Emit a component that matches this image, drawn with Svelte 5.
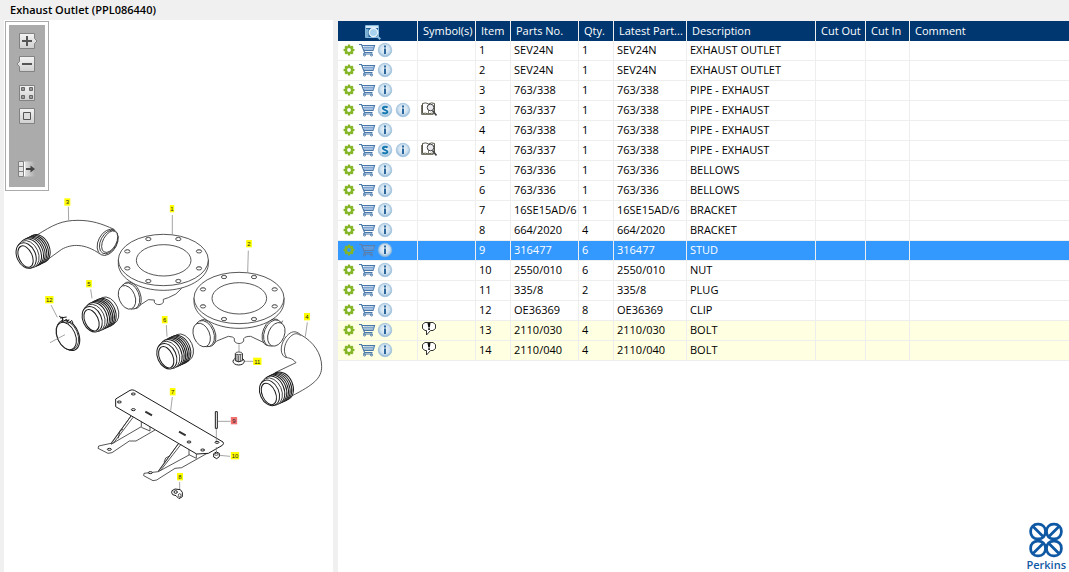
<script>
  const parts = [
    { item: '1', no: 'SEV24N', qty: 1, desc: 'EXHAUST OUTLET' },
    { item: '2', no: 'SEV24N', qty: 1, desc: 'EXHAUST OUTLET' },
    { item: '3', no: '763/338', qty: 1, desc: 'PIPE - EXHAUST' },
    { item: '3', no: '763/337', latest: '763/338', qty: 1, desc: 'PIPE - EXHAUST', superseded: true, symbol: 'book' },
    { item: '4', no: '763/338', qty: 1, desc: 'PIPE - EXHAUST' },
    { item: '4', no: '763/337', latest: '763/338', qty: 1, desc: 'PIPE - EXHAUST', superseded: true, symbol: 'book' },
    { item: '5', no: '763/336', qty: 1, desc: 'BELLOWS' },
    { item: '6', no: '763/336', qty: 1, desc: 'BELLOWS' },
    { item: '7', no: '16SE15AD/6', qty: 1, desc: 'BRACKET' },
    { item: '8', no: '664/2020', qty: 4, desc: 'BRACKET' },
    { item: '9', no: '316477', qty: 6, desc: 'STUD' },
    { item: '10', no: '2550/010', qty: 6, desc: 'NUT' },
    { item: '11', no: '335/8', qty: 2, desc: 'PLUG' },
    { item: '12', no: 'OE36369', qty: 8, desc: 'CLIP' },
    { item: '13', no: '2110/030', qty: 4, desc: 'BOLT', symbol: 'note' },
    { item: '14', no: '2110/040', qty: 4, desc: 'BOLT', symbol: 'note' }
  ];
  let selected = $state(10);

  // Callouts: number, centre x, centre y, box width (three units per pixel)
  const callouts = [
    ['1', 516, 626, 13], ['2', 747, 731, 17], ['3', 202, 606, 18], ['4', 921, 950, 18],
    ['5', 267, 851, 17], ['6', 494, 959, 17], ['7', 518, 1175, 17], ['8', 540, 1430, 18],
    ['9', 702, 1262, 19], ['10', 705, 1367, 25], ['11', 772, 1084, 25], ['12', 148, 899, 25]
  ];
  const holes = [[-45, -63], [45, -63], [107, -26], [107, 25], [45, 63], [-45, 63], [-108, 25], [-108, -26]];
  const ribs = [46, 41, 36, 31, 26, 20];
  const teeth = [0, 45, 90, 135, 180, 225, 270, 315];
</script>

{#snippet flange(x, y)}
  <g transform="translate({x} {y})">
    <path d="M-135 0V14C-132 56-72 91 0 91S132 56 135 14V0Z" />
    <ellipse rx="135" ry="77" />
    <ellipse cx="1" cy="1" rx="82" ry="47" />
    {#each holes as [hx, hy]}
      <ellipse cx={hx} cy={hy} rx="8" ry="5" />
      <path class="fine" d="M{hx - 7} {hy - 2}q7 -5 14 0" />
    {/each}
  </g>
{/snippet}

{#snippet neck(x, y, flip)}
  <g transform="translate({x} {y}) scale({flip} 1)">
    <ellipse cx="14" cy="-6" rx="26" ry="42" transform="rotate(-22 14 -6)" />
    <ellipse cx="9" cy="-4" rx="27" ry="41" transform="rotate(-22 9 -4)" />
    <ellipse rx="24" ry="37" transform="rotate(-22)" />
  </g>
{/snippet}

{#snippet bellows(x, y, tail)}
  <g transform="translate({x} {y})">
    {#if tail}
      <ellipse cx="48" cy="-27" rx="30" ry="43" transform="rotate(-24 48 -27)" />
    {/if}
    {#each ribs as r}
      <ellipse class="heavy" cx={r - 7} cy={-r * 0.48} rx="31" ry="44" transform="rotate(-24 {r - 7} {-r * 0.48})" />
    {/each}
    <ellipse cx="6" cy="-5" rx="31" ry="43" transform="rotate(-24 6 -5)" />
    <ellipse class="heavy" cx="1" cy="-1" rx="28" ry="40" transform="rotate(-24)" />
    <ellipse class="heavy" cx="-2" cy="1" rx="20" ry="34" transform="rotate(-24)" />
  </g>
{/snippet}

{#snippet disc(letter)}
  <svg viewBox="0 0 16 16">
    <circle cx="8" cy="8" r="6.800" fill="url(#disc)" stroke="#94b9d8" stroke-width=".6" />
    {#if letter === 'S'}
      <path d="M10.500 5.600C9.800 4.600 6 4.200 5.900 6.300S10.500 7.800 10.400 9.800 6.500 11.600 5.400 10.300" fill="none" stroke="#1678b0" stroke-width="2" />
    {:else}
      <path d="M7 3.500h2v2H7zM7 6.500h2V12H7z" fill="#2b669c" />
    {/if}
  </svg>
{/snippet}

<svelte:head><title>Exhaust Outlet (PPL086440)</title></svelte:head>

<svg class="defs" aria-hidden="true">
  <defs>
    <radialGradient id="disc" cx=".5" cy=".45" r=".55">
      <stop offset="0" stop-color="#f0f7fb" /><stop offset=".6" stop-color="#d0e2f0" /><stop offset="1" stop-color="#8fb6d6" />
    </radialGradient>
    <linearGradient id="key" x1="0" y1="0" x2="0" y2="1">
      <stop offset="0" stop-color="#f4f4f4" /><stop offset="1" stop-color="#cfcfcf" />
    </linearGradient>
    <linearGradient id="fade">
      <stop offset="0" stop-color="#e6e6e6" /><stop offset="1" stop-color="#ababab" />
    </linearGradient>
  </defs>
</svg>

<div class="page">
  <header><h1>Exhaust Outlet (PPL086440)</h1></header>
  <main>
    <section class="drawing" aria-label="Drawing">
      <div class="toolbar">
        <div class="tools">
          <button aria-label="Zoom in">
            <svg viewBox="0 0 16 16"><path d="M.5 .5h15v5L18 8l-2.500 2.500v5H.5z" fill="url(#key)" stroke="#828282" /><path d="M8 3v10M3 8h10" stroke="#555" stroke-width="2" /></svg>
          </button>
          <button aria-label="Zoom out">
            <svg viewBox="0 0 16 16"><path d="M15.500 .5H.5v5L-2 8l2.500 2.500v5h15z" fill="url(#key)" stroke="#828282" /><path d="M3 8h10" stroke="#555" stroke-width="2" /></svg>
          </button>
          <button class="group" aria-label="Show all">
            <svg viewBox="0 0 16 16"><path d="M.5 .5h15v15H.5z" fill="url(#key)" stroke="#828282" /><path d="M2.500 2.500h3v3h-3zM10.500 2.500h3v3h-3zM2.500 10.500h3v3h-3zM10.500 10.500h3v3h-3z" fill="#999" stroke="#666" /></svg>
          </button>
          <button aria-label="Fit">
            <svg viewBox="0 0 16 16"><path d="M.5 .5h15v15H.5z" fill="url(#key)" stroke="#828282" /><path d="M4.500 4.500h7v7h-7z" fill="#ddd" stroke="#555" /></svg>
          </button>
          <button class="last" aria-label="Toggle list">
            <svg viewBox="0 0 16 16"><path d="M5 .5h11v15H5z" fill="url(#fade)" /><path d="M-.5 .5h5v15h-5zM-.5 5.500h5M-.5 10.500h5" fill="#e6e6e6" stroke="#828282" /><path d="M5.500 1v14" stroke="#fff" /><path d="M7 8h6" stroke="#444" stroke-width="2" /><path d="M11.500 4.500v7L16 8z" fill="#444" /></svg>
          </button>
        </div>
      </div>

      <svg class="plan" viewBox="12 573 987 960" role="img" aria-label="Exhaust outlet exploded view">
        <!-- Pipe and bellows, item 3 -->
        <g transform="translate(0 570)">
          <path d="M108 137C160 104 185 91 234 91C275 91 305 101 342 118L300 192C255 160 215 161 185 178L138 212" />
          <ellipse cx="323" cy="157" rx="28" ry="42" transform="rotate(28 323 157)" />
          <ellipse cx="326" cy="156" rx="24" ry="38" transform="rotate(28 326 156)" />
          <ellipse cx="329" cy="155" rx="20" ry="35" transform="rotate(28 329 155)" />
        </g>
        {@render bellows(78, 768, false)}

        <!-- Outlet, item 1 -->
        <g transform="translate(300 585)">
          <path d="M85 262L110 337L145 314L163 315V322C168 331 185 331 190 322V313L205 308Q230 300 245 280" />
        </g>
        {@render flange(490, 780)}
        {@render neck(381, 892, 1)}

        {@render bellows(276, 959, true)}

        <!-- Clip, item 12 -->
        <g transform="translate(0 570)">
          <ellipse class="heavy" cx="205" cy="436" rx="31" ry="48" transform="rotate(-24 205 436)" />
          <ellipse cx="202" cy="436" rx="31" ry="46" transform="rotate(-24 202 436)" />
          <ellipse class="heavy" cx="199" cy="438" rx="27" ry="43" transform="rotate(-24 199 438)" />
          <path class="heavy" d="M177 378l12 8-3 10 14-8 6 12 9-9 4 9M180 384l20-3M186 380l3 12M207 388l-9 14" />
          <path class="fine" d="M150 458L195 434" />
        </g>

        {@render bellows(500, 1070, true)}

        <!-- Outlet and elbow, items 2 and 4 -->
        <g transform="translate(540 690)">
          <path d="M70 268L95 348L110 333L145 319Q160 320 163 325V333C168 343 186 343 191 333V326Q195 319 212 319L250 337L270 345L308 272" />
        </g>
        {@render flange(717, 894)}
        {@render neck(605, 1005, 1)}
        {@render neck(829, 1003, -1)}
        <g transform="translate(540 690)">
          <path class="fine" d="M177 343V366M193 394H220" />
          <ellipse class="heavy" cx="176" cy="394" rx="17" ry="11" />
          <path class="heavy" d="M166 370V392Q176 399 187 392V370" />
          <ellipse cx="176.500" cy="370" rx="10" ry="4" />
          <path d="M171 374v20M176 376v20M181 374v20" />
          <path d="M362 314C400 335 425 370 425 410C425 445 400 465 335 498L285 428L348 398C335 382 325 385 314 381C296 368 304 336 320 318C334 304 345 300 362 314Z" />
          <path d="M319 381C307 362 315 334 332 319C342 310 352 308 362 317" />
          <path class="fine" d="M382 277L376 320M205 62L203 127" />
        </g>
        {@render bellows(808, 1180, false)}

        <!-- Mounting plate, item 7 -->
        <g transform="translate(240 1125)">
          <path d="M153 123L93 205L56 213L54 220L84 235L96 233L148 198H168L225 165M93 208L184 155V130M210 150V168L184 157" />
          <path d="M296 205L235 290L192 295L191 302L219 317L230 315L285 280L305 278L385 233M235 290L327 240V212M349 230V250L327 239" />
          <path d="M115 190l5-23 9-4M252 262l5-13 12-6" />
          <path class="heavy" d="M107 72L150 46Q156 43 163 46L429 201Q433 206 427 211L385 235L350 237L107 95Z" />
          <path d="M153 123L93 207M160 126L100 205M296 205L235 288M303 208L242 286" />
          {#each [[118, 81], [160, 57], [160, 104], [327, 201], [368, 225], [411, 202], [88, 223], [211, 293]] as [hx, hy]}
            <ellipse class="heavy" cx={hx} cy={hy} rx="6" ry="3" />
          {/each}
          <path class="slot" d="M196 110l20 11M297 170l20 11" />
          <path class="heavy" d="M406 110v50h6v-50z" />
          <path class="fine" d="M409 162V198M409 216V232M413 139H452M418 241L450 244M277 66L272 107M299 321V343" />
          <path class="heavy" d="M401 236l8-5 9 4v10l-8 6-9-5z" />
          <ellipse cx="409" cy="238" rx="5" ry="3" />
          <path class="heavy" d="M276 347l9-5 16 2 6 8v13l-10 6-9-9-10-3-3-6z" />
          <ellipse class="heavy" cx="287" cy="351" rx="5" ry="4" />
          <ellipse cx="299" cy="361" rx="4" ry="5" />
        </g>

        <path class="fine" d="M205 620L206 661M517 645V704M272 868L276 895M153 915L172 952M499 975L501 1010" />

        {#each callouts as [n, x, y, w]}
          <rect class="tag" class:hot={n === '9'} x={x - w / 2} y={y - 11} width={w} height="22" />
          <text x={x} y={y + 7}>{n}</text>
        {/each}
      </svg>
    </section>

    <section class="list">
      <table>
        <colgroup>
          <col class="c80" /><col class="c58" /><col class="c35" /><col class="c68" /><col class="c35" />
          <col class="c73" /><col class="c129" /><col class="c50" /><col class="c44" /><col />
        </colgroup>
        <thead>
          <tr>
            <th class="find" scope="col" aria-label="Actions">
              <svg viewBox="0 0 16 16"><path d="M.5 1.500h13v12H.5z" fill="#1f5f98" stroke="#86b7da" /><path d="M1 2h12v2H1z" fill="#d5e8f5" /><path d="M1 5h2.500v8H1z" fill="#79aed4" /><circle cx="8.500" cy="8.500" r="4.200" fill="#a9d2ee" stroke="#eaf5fb" stroke-width="1.200" /><path d="M11.700 11.700l3.600 3.600" stroke="#8fbbdc" stroke-width="2" /></svg>
            </th>
            <th scope="col">Symbol(s)</th><th scope="col">Item</th><th scope="col">Parts No.</th><th scope="col">Qty.</th>
            <th scope="col">Latest Part...</th><th scope="col">Description</th><th scope="col">Cut Out</th><th scope="col">Cut In</th><th scope="col">Comment</th>
          </tr>
        </thead>
        <tbody>
          {#each parts as p, i}
            <tr class:selected={selected === i} class:noted={p.symbol === 'note'} onclick={() => (selected = i)}>
              <td>
                <div class="actions">
                  <button aria-label="Options">
                    <svg viewBox="0 0 16 16">
                      <g fill="#83b526">
                        {#each teeth as a}<rect x="6.800" y="2.600" width="2.400" height="2.600" rx=".5" transform="rotate({a} 8 8)" />{/each}
                      </g>
                      <circle cx="8" cy="8" r="3" fill="none" stroke="#83b526" stroke-width="2.200" />
                    </svg>
                  </button>
                  <button aria-label="Add to cart">
                    <svg viewBox="0 0 16 16" fill="none" stroke={selected === i ? '#5a7fae' : '#4878aa'}>
                      <path d="M0 2.500h2.500L5.500 10.500h8M3 3.500h12.500L14 8.500H5" stroke-width="1.200" />
                      <path d="M6 4v4M8 4v4M10 4v4M12 4v4M14 4v3M4 5.500h11M5 7h10" stroke="#6f9bcb" stroke-width=".8" />
                      <path d="M5.500 10.500L4.500 12h9" /><circle cx="5.500" cy="13" r="1" /><circle cx="12.500" cy="13" r="1" />
                    </svg>
                  </button>
                  {#if p.superseded}<button aria-label="Supersession">{@render disc('S')}</button>{/if}
                  <button aria-label="Information">{@render disc('i')}</button>
                </div>
              </td>
              <td>
                {#if p.symbol === 'book'}
                  <svg class="symbol" viewBox="0 0 16 16"><path d="M1.500 2.500Q5 1 7.500 3q3-2 6-.5v10q-3-1-6 .5-3-1.500-6-.5z" fill="#fff" stroke="#55554a" /><path d="M.5 4v9.500h12M7.500 3v10" fill="none" stroke="#77776a" /><circle cx="9.500" cy="6.500" r="3.300" fill="#e9e9ee" stroke="#444" /><path d="M11.500 9.500l4 5" stroke="#444" stroke-width="1.700" /></svg>
                {:else if p.symbol === 'note'}
                  <svg class="symbol" viewBox="0 0 16 16"><path d="M4 1.500h8l2.500 2v4l-2.500 2H9.500L5.500 14V9.500H4L1.500 7.500v-4z" fill="#fff" stroke="#333" /><path d="M6.500 2h3L8.800 6.500H7.300zM7.200 7.200h1.700v1.700H7.200z" fill="#111" /></svg>
                {/if}
              </td>
              <td>{p.item}</td><td>{p.no}</td><td>{p.qty}</td><td>{p.latest ?? p.no}</td><td>{p.desc}</td><td></td><td></td><td></td>
            </tr>
          {/each}
        </tbody>
      </table>

      <div class="brand">
        <svg viewBox="0 0 32 34" aria-hidden="true">
          <g fill="none" stroke="#0f59a4" stroke-width="2.600">
            <rect x="1.500" y="2" width="14" height="14" rx="6.500" /><rect x="16.500" y="2" width="14" height="14" rx="6.500" />
            <rect x="1.500" y="18" width="14" height="14" rx="6.500" /><rect x="16.500" y="18" width="14" height="14" rx="6.500" />
            <path d="M4 4.500l9 9M28 4.500l-9 9M4 29.500l9-9M28 29.500l-9-9" />
          </g>
        </svg>
        <span>Perkins</span>
      </div>
    </section>
  </main>
</div>

<style>
  :global(body) { margin: 0; background: #f0f0f0; }
  .defs { position: absolute; width: 0; height: 0; }
  .page {
    display: flex; flex-direction: column; min-height: 100vh;
    font: 11px/18px "Open Sans", "Noto Sans", sans-serif; color: #000;
  }
  h1 { margin: 0; padding-left: 10px; font-size: 11px; line-height: 20px; font-weight: 600; }
  main { flex: 1; display: flex; gap: 5px; padding-left: 4px; }
  button { display: block; width: 16px; height: 16px; padding: 0; border: 0; background: none; cursor: pointer; }
  button svg { display: block; width: 16px; height: 16px; overflow: visible; }

  .drawing { flex: 0 0 329px; background: #fff; padding-top: 1px; box-sizing: border-box; }
  .toolbar { display: inline-block; vertical-align: top; margin-left: 1px; padding: 3px; border: 1px solid #aaa; background: #fff; }
  .tools { display: flex; flex-direction: column; gap: 7px; padding: 8px 10px 10px; background: #ababab; }
  .group { margin-top: 6px; }
  .last { margin-top: 30px; }

  .plan { display: block; width: 100%; }
  .plan path, .plan ellipse { fill: #fff; stroke: #2c2c2c; stroke-width: 2.4; stroke-linejoin: round; }
  .plan .fine { stroke: #777; stroke-width: 2; fill: none; }
  .plan .heavy { stroke: #1c1c1c; stroke-width: 3; }
  .plan .slot { stroke: #333; stroke-width: 6; }
  .plan .tag { fill: #ff0; }
  .plan .hot { fill: #f27272; }
  .plan text { font: 18px "Liberation Sans", sans-serif; text-anchor: middle; fill: #222; }

  .list { flex: 1; min-width: 0; display: flex; flex-direction: column; margin-top: 1px; background: #fff; }
  table { width: 100%; table-layout: fixed; border-collapse: separate; border-spacing: 0; }
  th, td { box-sizing: border-box; height: 20px; overflow: hidden; white-space: nowrap; text-align: left; border-right: 1px solid #eee; }
  th { padding: 0 0 0 5px; font-weight: 400; line-height: 20px; color: #fff; background: #003770; }
  td { padding: 0 0 0 3px; border-bottom: 1px solid #eee; vertical-align: top; }
  th:last-child, td:last-child { border-right: 0; }
  .c35 { width: 35px; } .c44 { width: 44px; } .c50 { width: 50px; } .c58 { width: 58px; }
  .c68 { width: 68px; } .c73 { width: 73px; } .c80 { width: 80px; } .c129 { width: 129px; }
  .find { padding: 0 10px 0 0; text-align: center; }
  .find svg { display: inline-block; width: 16px; height: 16px; vertical-align: middle; }
  .actions { display: flex; align-items: center; height: 18px; gap: 2px; }
  .symbol { display: block; width: 16px; height: 16px; }
  .noted td { background: #ffffe1; }
  .selected td { background: #3399ff; color: #fff; }

  .brand { display: flex; flex-direction: column; align-items: center; align-self: flex-end; margin-top: auto; padding-right: 3px; }
  .brand svg { display: block; width: 34px; height: 36px; }
  .brand span { font: 600 11px/14px "Open Sans", sans-serif; color: #0f59a4; }
</style>
